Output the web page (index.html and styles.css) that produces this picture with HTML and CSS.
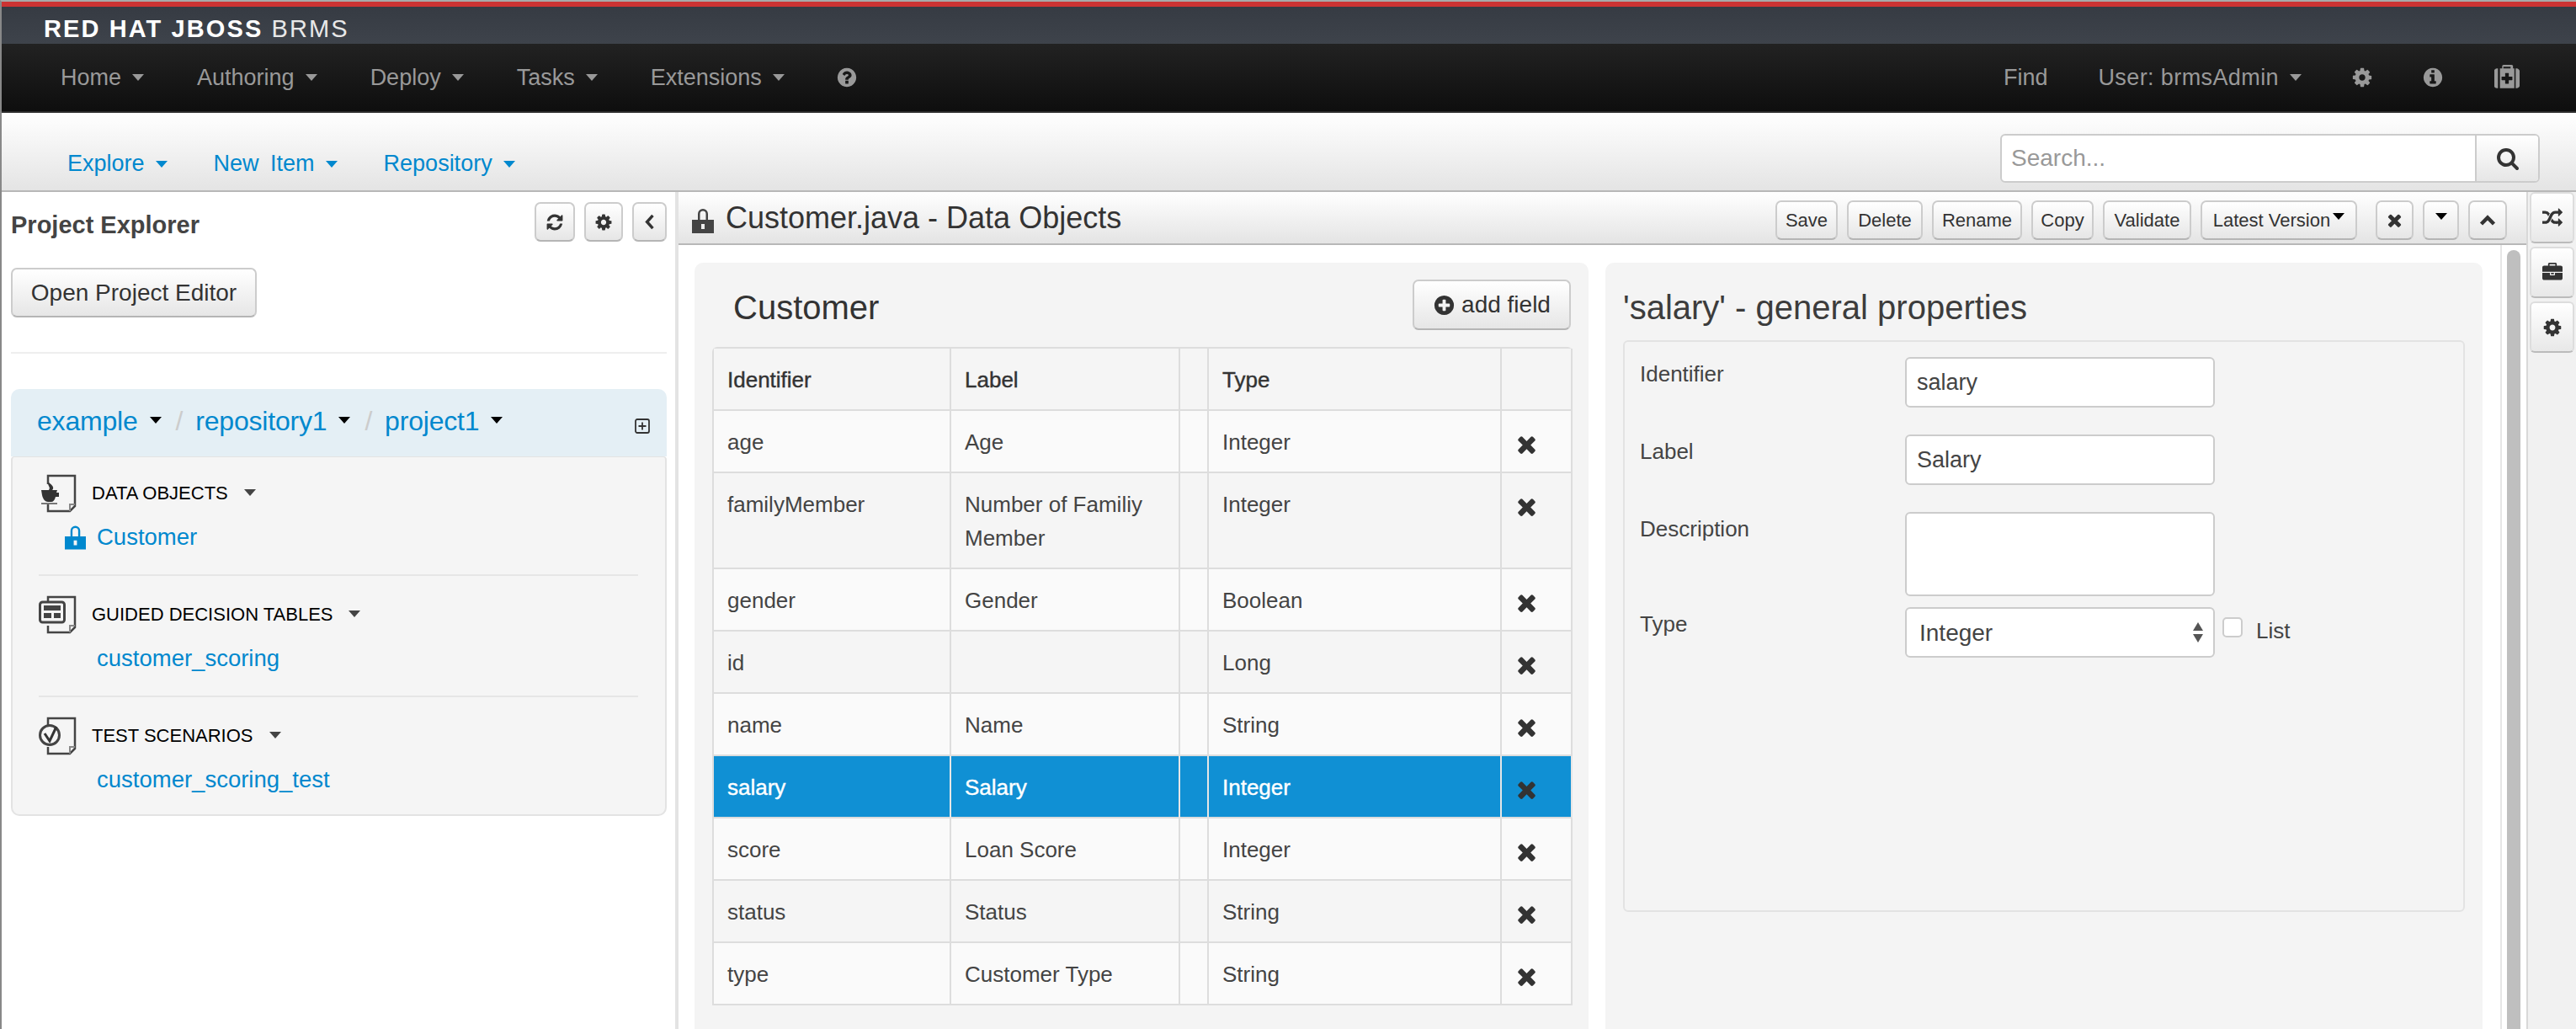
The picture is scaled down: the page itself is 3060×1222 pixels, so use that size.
FILE: index.html
```html
<!DOCTYPE html>
<html lang="en">
<head>
    <meta charset="UTF-8">
    <title>Red Hat JBoss BRMS</title>
    <link rel="stylesheet" href="styles.css">
</head>
<body>
    <svg class="sprite" xmlns="http://www.w3.org/2000/svg">
        <symbol id="i-cog" viewBox="0 0 1792 1792"><path d="M1152 896q0-106-75-181t-181-75-181 75-75 181 75 181 181 75 181-75 75-181zm512-109v222q0 12-8 23t-20 13l-185 28q-19 54-39 91 35 50 107 138 10 12 10 25t-9 23q-27 37-99 108t-94 71q-12 0-26-9l-138-108q-44 23-91 38-16 136-29 186-7 28-36 28h-222q-14 0-24.5-8.5t-11.5-21.5l-28-184q-49-16-90-37l-141 107q-10 9-25 9-14 0-25-11-126-114-165-168-7-10-7-23 0-12 8-23 15-21 51-66.5t54-70.5q-27-50-41-99l-183-27q-13-2-21-12.5t-8-23.5v-222q0-12 8-23t19-13l186-28q14-46 39-92-40-57-107-138-10-12-10-24 0-10 9-23 26-36 98.5-107.5t94.5-71.5q13 0 26 10l138 107q44-23 91-38 16-136 29-186 7-28 36-28h222q14 0 24.5 8.5t11.5 21.5l28 184q49 16 90 37l142-107q9-9 24-9 13 0 25 10 129 119 165 170 7 8 7 22 0 12-8 23-15 21-51 66.5t-54 70.5q26 50 41 98l183 28q13 2 21 12.5t8 23.5z"/></symbol>
        <symbol id="i-times" viewBox="0 0 1792 1792"><path d="M1490 1322q0 40-28 68l-136 136q-28 28-68 28t-68-28l-294-294-294 294q-28 28-68 28t-68-28l-136-136q-28-28-28-68t28-68l294-294-294-294q-28-28-28-68t28-68l136-136q28-28 68-28t68 28l294 294 294-294q28-28 68-28t68 28l136 136q28 28 28 68t-28 68l-294 294 294 294q28 28 28 68z"/></symbol>
        <symbol id="i-search" viewBox="0 0 1792 1792"><path d="M1216 832q0-185-131.5-316.5t-316.5-131.5-316.5 131.5-131.5 316.5 131.5 316.5 316.5 131.5 316.5-131.5 131.5-316.5zm512 832q0 52-38 90t-90 38q-54 0-90-38l-343-342q-179 124-399 124-143 0-273.5-55.5t-225-150-150-225-55.5-273.5 55.5-273.5 150-225 225-150 273.5-55.5 273.5 55.5 225 150 150 225 55.5 273.5q0 220-124 399l343 343q37 37 37 90z"/></symbol>
        <symbol id="i-question" viewBox="0 0 1792 1792"><path d="M1024 1376v-192q0-14-9-23t-23-9h-192q-14 0-23 9t-9 23v192q0 14 9 23t23 9h192q14 0 23-9t9-23zm256-672q0-88-55.5-163t-138.5-116-170-41q-243 0-371 213-15 24 8 42l132 100q7 6 19 6 16 0 25-12 53-68 86-92 34-24 86-24 48 0 85.5 26t37.5 59q0 38-20 61t-68 45q-63 28-115.5 86.5t-52.5 125.5v36q0 14 9 23t23 9h192q14 0 23-9t9-23q0-19 21.5-49.5t54.5-49.5q32-18 49-28.5t46-35 44.5-48 28-60.5 12.5-81zm384 192q0 209-103 385.5t-279.5 279.5-385.5 103-385.5-103-279.5-279.5-103-385.5 103-385.5 279.5-279.5 385.5-103 385.5 103 279.5 279.5 103 385.5z"/></symbol>
        <symbol id="i-info" viewBox="0 0 1792 1792"><path d="M1152 1376v-160q0-14-9-23t-23-9h-96v-512q0-14-9-23t-23-9h-320q-14 0-23 9t-9 23v160q0 14 9 23t23 9h96v320h-96q-14 0-23 9t-9 23v160q0 14 9 23t23 9h448q14 0 23-9t9-23zm-128-896v-160q0-14-9-23t-23-9h-192q-14 0-23 9t-9 23v160q0 14 9 23t23 9h192q14 0 23-9t9-23zm640 416q0 209-103 385.5t-279.5 279.5-385.5 103-385.5-103-279.5-279.5-103-385.5 103-385.5 279.5-279.5 385.5-103 385.5 103 279.5 279.5 103 385.5z"/></symbol>
        <symbol id="i-plus" viewBox="0 0 1792 1792"><path d="M1344 960v-128q0-26-19-45t-45-19h-256v-256q0-26-19-45t-45-19h-128q-26 0-45 19t-19 45v256h-256q-26 0-45 19t-19 45v128q0 26 19 45t45 19h256v256q0 26 19 45t45 19h128q26 0 45-19t19-45v-256h256q26 0 45-19t19-45zm320-64q0 209-103 385.5t-279.5 279.5-385.5 103-385.5-103-279.5-279.5-103-385.5 103-385.5 279.5-279.5 385.5-103 385.5 103 279.5 279.5 103 385.5z"/></symbol>
        <symbol id="i-refresh" viewBox="0 0 1792 1792"><path d="M1639 1056q0 5-1 7-64 268-268 434.5t-478 166.5q-146 0-282.5-55t-243.5-157l-129 129q-19 19-45 19t-45-19-19-45v-448q0-26 19-45t45-19h448q26 0 45 19t19 45-19 45l-137 137q71 66 161 102t187 36q134 0 250-65t186-179q11-17 53-117 8-23 30-23h192q13 0 22.5 9.5t9.5 22.5zm25-800v448q0 26-19 45t-45 19h-448q-26 0-45-19t-19-45 19-45l138-138q-148-137-349-137-134 0-250 65t-186 179q-11 17-53 117-8 23-30 23h-199q-13 0-22.5-9.5t-9.5-22.5v-7q65-268 270-434.5t480-166.5q146 0 284 55.5t245 156.5l130-129q19-19 45-19t45 19 19 45z"/></symbol>
        <symbol id="i-random" viewBox="0 0 1792 1792"><path d="M666 481q-60 92-137 273-22-45-37-72.5t-40.5-63.5-51-56.5-63-35-81.5-14.5h-224q-14 0-23-9t-9-23v-192q0-14 9-23t23-9h224q250 0 410 225zm1126 799q0 14-9 23l-320 320q-9 9-23 9-13 0-22.5-9.5t-9.5-22.5v-192q-32 0-85 .5t-81 1-73-1-71-5-64-10.5-63-18.5-58-28.5-59-40-55-53.5-56-69.5q59-93 136-273 22 45 37 72.5t40.5 63.5 51 56.5 63 35 81.5 14.5h256v-192q0-14 9-23t23-9q12 0 24 10l319 319q9 9 9 23zm0-896q0 14-9 23l-320 320q-9 9-23 9-13 0-22.5-9.5t-9.5-22.5v-192h-256q-48 0-87 15t-69 45-51 61.5-45 77.5q-32 62-78 171-29 66-49.5 111t-54 105-64 100-74 83-90 68.5-106.5 42-128 16.5h-224q-14 0-23-9t-9-23v-192q0-14 9-23t23-9h224q48 0 87-15t69-45 51-61.5 45-77.5q32-62 78-171 29-66 49.5-111t54-105 64-100 74-83 90-68.5 106.5-42 128-16.5h256v-192q0-14 9-23t23-9q12 0 24 10l319 319q9 9 9 23z"/></symbol>
        <symbol id="i-briefcase" viewBox="0 0 1792 1792"><path d="M640 256h512v-128h-512v128zm1152 640v480q0 66-47 113t-113 47h-1472q-66 0-113-47t-47-113v-480h672v160q0 26 19 45t45 19h320q26 0 45-19t19-45v-160h672zm-768 0v128h-256v-128h256zm768-480v384h-1792v-384q0-66 47-113t113-47h352v-160q0-40 28-68t68-28h576q40 0 68 28t28 68v160h352q66 0 113 47t47 113z"/></symbol>
        <symbol id="i-medkit" viewBox="0 0 1792 1792"><path d="M1280 1056v-192q0-14-9-23t-23-9h-224v-224q0-14-9-23t-23-9h-192q-14 0-23 9t-9 23v224h-224q-14 0-23 9t-9 23v192q0 14 9 23t23 9h224v224q0 14 9 23t23 9h192q14 0 23-9t9-23v-224h224q14 0 23-9t9-23zm-640-800h512v-128h-512v128zm-384 0v1408h-64q-92 0-158-66t-66-158v-960q0-92 66-158t158-66h64zm1164 0v1408h-1024v-1408h160v-160q0-40 28-68t68-28h576q40 0 68 28t28 68v160h96zm380 224v960q0 92-66 158t-158 66h-64v-1408h64q92 0 158 66t66 158z"/></symbol>
        <symbol id="i-lock" viewBox="0 0 26 30"><path d="M7 14V7a6 6 0 0 1 12 0v7h-2.500V7a3.500 3.500 0 0 0-7 0v7z"/><path fill-rule="evenodd" d="M0 14h26v16H0zM11 19v6h4v-6z"/></symbol>
        <symbol id="i-doc" viewBox="0 0 46 46"><path d="M11 12V2h32v36l-6 6H11V36" fill="none" stroke="#444" stroke-width="2.500"/><path d="M43 36h-6v8" fill="none" stroke="#888" stroke-width="2"/></symbol>
    </svg>

    <header class="top-bar">
        <div class="brand"><b>RED HAT JBOSS</b> BRMS</div>
        <nav class="main-nav">
            <div class="nav-left">
                <a class="nav-item">Home <i class="caret"></i></a>
                <a class="nav-item">Authoring <i class="caret"></i></a>
                <a class="nav-item">Deploy <i class="caret"></i></a>
                <a class="nav-item">Tasks <i class="caret"></i></a>
                <a class="nav-item">Extensions <i class="caret"></i></a>
                <svg class="icon nav-icon"><use href="#i-question"/></svg>
            </div>
            <div class="nav-right">
                <a class="nav-item">Find</a>
                <a class="nav-item user-item">User: brmsAdmin <i class="caret"></i></a>
                <svg class="icon nav-icon gear-icon"><use href="#i-cog"/></svg>
                <svg class="icon nav-icon info-icon"><use href="#i-info"/></svg>
                <svg class="icon nav-icon med-icon"><use href="#i-medkit"/></svg>
            </div>
        </nav>
    </header>

    <div class="toolbar">
        <div class="tool-links">
            <a class="tool-link">Explore <i class="caret"></i></a>
            <a class="tool-link">New Item <i class="caret"></i></a>
            <a class="tool-link">Repository <i class="caret"></i></a>
        </div>
        <div class="search-box">
            <input class="search-input" type="text" placeholder="Search...">
            <div class="search-btn"><svg class="icon"><use href="#i-search"/></svg></div>
        </div>
    </div>

    <div class="workspace">
        <!-- Project Explorer -->
        <aside class="explorer">
            <div class="explorer-head">
                <h2>Project Explorer</h2>
                <div class="explorer-tools">
                    <button class="btn tool-refresh"><svg class="icon"><use href="#i-refresh"/></svg></button>
                    <button class="btn tool-gear"><svg class="icon"><use href="#i-cog"/></svg></button>
                    <button class="btn tool-back"><svg class="angle" viewBox="0 0 14 22"><path d="M11 2 3 11l8 9"/></svg></button>
                </div>
            </div>
            <button class="btn open-editor">Open Project Editor</button>
            <hr class="rule">
            <div class="crumbs">
                <a>example</a><i class="caret"></i><span class="slash">/</span>
                <a>repository1</a><i class="caret"></i><span class="slash">/</span>
                <a>project1</a><i class="caret"></i>
                <svg class="expand" viewBox="0 0 18 18"><rect x="1" y="1" width="16" height="16" rx="2"/><path d="M9 4.500v9M4.500 9h9"/></svg>
            </div>
            <div class="assets">
                <section class="asset">
                    <div class="asset-head">
                        <svg class="doc-icon" viewBox="0 0 46 46">
                            <use href="#i-doc"/>
                            <path d="M12 10c-3 3 3 5 0 9H3l1 6c1 5 4 8 7 8h4c2 0 4-2 5-6h4v-5h-3l1-3h-6c3-3 0-6-4-9z" fill="#333"/>
                            <path d="M3 35h19" stroke="#777" stroke-width="2"/>
                        </svg>
                        <span>DATA OBJECTS</span><i class="caret"></i>
                    </div>
                    <a class="asset-link"><svg class="lock-blue"><use href="#i-lock"/></svg>Customer</a>
                </section>
                <section class="asset">
                    <div class="asset-head">
                        <svg class="doc-icon" viewBox="0 0 46 46">
                            <use href="#i-doc"/>
                            <rect x="1.500" y="8" width="29" height="24" rx="3" fill="#f5f5f5" stroke="#444" stroke-width="3"/>
                            <path d="M6 12h20v6H6zM6 21h9v6H6zM18 21h8v6h-8z" fill="#444"/>
                        </svg>
                        <span>GUIDED DECISION TABLES</span><i class="caret"></i>
                    </div>
                    <a class="asset-link">customer_scoring</a>
                </section>
                <section class="asset">
                    <div class="asset-head">
                        <svg class="doc-icon" viewBox="0 0 46 46">
                            <use href="#i-doc"/>
                            <circle cx="13" cy="22" r="11.500" fill="#f5f5f5" stroke="#444" stroke-width="3"/>
                            <path d="M7 20l6 9 8-17" fill="none" stroke="#333" stroke-width="3"/>
                        </svg>
                        <span>TEST SCENARIOS</span><i class="caret"></i>
                    </div>
                    <a class="asset-link">customer_scoring_test</a>
                </section>
            </div>
        </aside>

        <!-- Editor -->
        <main class="editor">
            <div class="title-bar">
                <svg class="lock-dark"><use href="#i-lock"/></svg>
                <h1>Customer.java - Data Objects</h1>
                <div class="title-actions">
                    <button class="btn btn-sm act-save">Save</button>
                    <button class="btn btn-sm act-delete">Delete</button>
                    <button class="btn btn-sm act-rename">Rename</button>
                    <button class="btn btn-sm act-copy">Copy</button>
                    <button class="btn btn-sm act-validate">Validate</button>
                    <button class="btn btn-sm act-version">Latest Version<i class="caret"></i></button>
                    <button class="btn btn-sm act-close"><svg class="icon"><use href="#i-times"/></svg></button>
                    <button class="btn btn-sm act-menu"><i class="caret"></i></button>
                    <button class="btn btn-sm act-up"><svg class="angle" viewBox="0 0 20 14"><path d="M2.500 11 10 3.500l7.500 7.500"/></svg></button>
                </div>
            </div>
            <div class="editor-body">
                <div class="panels">
                    <section class="panel object-panel">
                        <div class="object-head">
                            <h3>Customer</h3>
                            <button class="btn add-field"><svg class="icon"><use href="#i-plus"/></svg>add field</button>
                        </div>
                        <table class="fields">
                            <colgroup><col class="c-id"><col class="c-label"><col class="c-gap"><col class="c-type"><col class="c-del"></colgroup>
                            <thead>
                                <tr><th>Identifier</th><th>Label</th><th></th><th>Type</th><th></th></tr>
                            </thead>
                            <tbody>
                                <tr><td>age</td><td>Age</td><td></td><td>Integer</td><td><svg class="icon del"><use href="#i-times"/></svg></td></tr>
                                <tr><td>familyMember</td><td>Number of Familiy Member</td><td></td><td>Integer</td><td><svg class="icon del"><use href="#i-times"/></svg></td></tr>
                                <tr><td>gender</td><td>Gender</td><td></td><td>Boolean</td><td><svg class="icon del"><use href="#i-times"/></svg></td></tr>
                                <tr><td>id</td><td></td><td></td><td>Long</td><td><svg class="icon del"><use href="#i-times"/></svg></td></tr>
                                <tr><td>name</td><td>Name</td><td></td><td>String</td><td><svg class="icon del"><use href="#i-times"/></svg></td></tr>
                                <tr class="selected"><td>salary</td><td>Salary</td><td></td><td>Integer</td><td><svg class="icon del"><use href="#i-times"/></svg></td></tr>
                                <tr><td>score</td><td>Loan Score</td><td></td><td>Integer</td><td><svg class="icon del"><use href="#i-times"/></svg></td></tr>
                                <tr><td>status</td><td>Status</td><td></td><td>String</td><td><svg class="icon del"><use href="#i-times"/></svg></td></tr>
                                <tr><td>type</td><td>Customer Type</td><td></td><td>String</td><td><svg class="icon del"><use href="#i-times"/></svg></td></tr>
                            </tbody>
                        </table>
                    </section>

                    <section class="panel props-panel">
                        <h3>'salary' - general properties</h3>
                        <div class="props-box">
                            <div class="prop-row">
                                <label>Identifier</label>
                                <input class="field" type="text" value="salary">
                            </div>
                            <div class="prop-row">
                                <label>Label</label>
                                <input class="field" type="text" value="Salary">
                            </div>
                            <div class="prop-row desc-row">
                                <label>Description</label>
                                <textarea class="field area"></textarea>
                            </div>
                            <div class="prop-row type-row">
                                <label>Type</label>
                                <div class="select-wrap">
                                    <select class="field select"><option>Integer</option></select>
                                    <i class="spin-up"></i><i class="spin-down"></i>
                                </div>
                                <span class="check"></span><span class="check-label">List</span>
                            </div>
                        </div>
                    </section>
                </div>
                <div class="scroll-track"><div class="scroll-thumb"></div></div>
            </div>
        </main>

        <div class="side-tabs">
            <div class="side-tab"><svg class="icon"><use href="#i-random"/></svg></div>
            <div class="side-tab"><svg class="icon"><use href="#i-briefcase"/></svg></div>
            <div class="side-tab"><svg class="icon"><use href="#i-cog"/></svg></div>
        </div>
    </div>
</body>
</html>
```

FILE: styles.css
```css
* {
    box-sizing: border-box;
}
body {
    margin: 0;
    height: 1222px;
    overflow: hidden;
    display: flex;
    flex-direction: column;
    background-color: #fff;
    border-top: 2px solid #a8a8a8;
    border-left: 2px solid #888;
    font-family: "Liberation Sans", Arial, sans-serif;
    font-size: 26px;
    color: #444;
}
.sprite {
    display: none;
}
.icon {
    fill: currentColor;
    display: block;
}
.caret {
    display: inline-block;
    width: 0;
    height: 0;
    border-left: 7px solid transparent;
    border-right: 7px solid transparent;
    border-top: 8px solid #000;
}

/* Top bar */
.top-bar {
    border-top: 6px solid #cc3333;
    flex: none;
}
.brand {
    height: 44px;
    padding: 13px 0 0 50px;
    background: linear-gradient(#363b43, #3e434b);
    color: #e8e8e8;
    font-size: 29px;
    line-height: 26px;
    letter-spacing: 2.1px;
}
.brand b {
    color: #fff;
}
.main-nav {
    height: 82px;
    padding: 0 70px;
    display: flex;
    justify-content: space-between;
    align-items: center;
    background: linear-gradient(#222, #0e0e0e);
    border-bottom: 2px solid #2c2c2c;
    color: #999;
    font-size: 27px;
}
.nav-left, .nav-right {
    display: flex;
    align-items: center;
}
.nav-item {
    display: flex;
    align-items: center;
    gap: 13px;
    margin-right: 63px;
}
.nav-item .caret {
    border-top-color: #999;
}
.nav-icon {
    width: 26px;
    height: 26px;
    color: #999;
    margin-left: -2px;
}
.nav-right {
    margin-right: -3px;
}
.nav-right .nav-item {
    margin-right: 60px;
}
.user-item {
    margin-right: 59px !important;
    letter-spacing: 0.4px;
}
.info-icon {
    margin-left: 58px;
}
.med-icon {
    margin-left: 60px;
    width: 30px;
    height: 30px;
}
.gear-icon {
    margin-left: 0;
}

/* Second toolbar */
.toolbar {
    height: 94px;
    flex: none;
    padding: 25px 43px 0 78px;
    display: flex;
    justify-content: space-between;
    background: linear-gradient(#fff, #e4e4e4);
    border-bottom: 2px solid #b8b8b8;
}
.tool-links {
    display: flex;
    gap: 55px;
    padding-top: 2px;
    font-size: 27px;
    line-height: 32px;
    word-spacing: 6px;
    color: #0088ce;
}
.tool-link {
    display: flex;
    align-items: center;
    gap: 13px;
}
.tool-link .caret {
    border-top-color: #0088ce;
    margin-top: 2px;
}
.search-box {
    width: 641px;
    height: 58px;
    display: flex;
    border: 2px solid #ccc;
    border-radius: 6px;
    background-color: #fff;
}
.search-input {
    flex: 1;
    min-width: 0;
    border: none;
    border-radius: 6px 0 0 6px;
    padding: 0 11px;
    font: 28px "Liberation Sans", Arial, sans-serif;
    outline: none;
}
.search-input::placeholder {
    color: #999;
}
.search-btn {
    width: 75px;
    display: flex;
    align-items: center;
    justify-content: center;
    border-left: 2px solid #ccc;
    background: linear-gradient(#fff, #e6e6e6);
    border-radius: 0 4px 4px 0;
    color: #333;
}
.search-btn .icon {
    width: 28px;
    height: 28px;
}

/* Shared buttons */
.btn {
    display: flex;
    align-items: center;
    justify-content: center;
    padding: 0;
    background: linear-gradient(#fff, #e6e6e6);
    border: 2px solid #ccc;
    border-bottom-color: #b5b5b5;
    border-radius: 7px;
    font-family: "Liberation Sans", Arial, sans-serif;
    color: #333;
}
.btn .icon {
    width: 22px;
    height: 22px;
}
.angle {
    fill: none;
    stroke: #333;
    stroke-width: 4;
}

/* Project Explorer */
.workspace {
    flex: 1;
    min-height: 0;
    display: flex;
}
.explorer {
    width: 804px;
    flex: none;
    padding: 12px 10px 0 11px;
    border-right: 4px solid #e3e3e3;
}
.explorer-head {
    display: flex;
    justify-content: space-between;
    align-items: center;
    height: 47px;
}
.explorer-head h2 {
    margin: 0;
    padding-top: 8px;
    font-size: 29px;
    color: #444;
}
.explorer-tools {
    display: flex;
    gap: 11px;
}
.explorer-tools .btn {
    height: 47px;
    width: 46px;
}
.tool-refresh {
    width: 48px !important;
}
.tool-back {
    width: 41px !important;
}
.tool-back .angle {
    width: 12px;
    height: 19px;
}
.open-editor {
    width: 292px;
    height: 59px;
    margin-top: 31px;
    font-size: 28px;
}
.rule {
    border: none;
    border-top: 2px solid #eee;
    margin: 41px 0 42px;
}
.crumbs {
    height: 80px;
    padding: 0 20px 4px 31px;
    display: flex;
    align-items: center;
    background-color: #e4eff5;
    border-radius: 10px 10px 0 0;
    font-size: 32px;
    letter-spacing: -0.2px;
    color: #0088ce;
}
.crumbs .caret {
    margin: 0 0 2px 14px;
}
.slash {
    margin: 0 15px 0 17px;
    color: #ccc;
}
.expand {
    width: 18px;
    height: 18px;
    margin: 12px 0 0 auto;
    fill: none;
    stroke: #333;
    stroke-width: 1.800;
}
.assets {
    height: 427px;
    padding: 20px 32px 0 31px;
    background-color: #f5f5f5;
    border: 2px solid #e3e3e3;
    border-top-width: 1px;
    border-radius: 4px 4px 10px 10px;
}
.asset {
    padding-bottom: 24px;
    border-bottom: 2px solid #e6e6e6;
}
.asset + .asset {
    padding-top: 23px;
}
.asset:last-child {
    border-bottom: none;
}
.asset-head {
    height: 46px;
    display: flex;
    align-items: center;
    font-size: 22px;
    color: #000;
}
.doc-icon {
    width: 46px;
    height: 46px;
    margin-right: 17px;
    flex: none;
}
.asset-head .caret {
    margin-left: 19px;
    border-top-color: #444;
    margin-top: -2px;
}
.asset-link {
    display: flex;
    align-items: center;
    margin: 9px 0 0 69px;
    height: 40px;
    font-size: 27.5px;
    color: #0088ce;
}
.lock-blue {
    width: 25px;
    height: 32px;
    margin: 0 13px 0 -38px;
    fill: #0088ce;
}

/* Editor */
.editor {
    flex: 1;
    min-width: 0;
    display: flex;
    flex-direction: column;
}
.title-bar {
    height: 63px;
    flex: none;
    display: flex;
    align-items: center;
    padding: 0 23px 0 16px;
    background: linear-gradient(#fff, #e4e4e4);
    border-bottom: 2px solid #b8b8b8;
}
.lock-dark {
    width: 26px;
    height: 30px;
    margin: 6px 14px 0 0;
    fill: #444;
}
.title-bar h1 {
    margin: 0;
    font-size: 36px;
    font-weight: normal;
    color: #333;
    white-space: nowrap;
}
.title-actions {
    margin: 6px 0 0 auto;
    display: flex;
    gap: 11px;
}
.btn-sm {
    height: 47px;
    font-size: 22px;
}
.act-save { width: 74px; }
.act-delete { width: 90px; }
.act-rename { width: 107px; }
.act-copy { width: 74px; }
.act-validate { width: 105px; }
.act-version {
    width: 186px;
    margin-right: 11px;
    gap: 3px;
}
.act-version .caret, .act-menu .caret {
    margin-bottom: 10px;
}
.act-close { width: 45px; }
.act-close .icon { width: 23px; height: 23px; }
.act-menu { width: 43px; }
.act-up { width: 46px; }
.act-up .angle { width: 20px; height: 14px; stroke-width: 4.500; }

.editor-body {
    flex: 1;
    min-height: 0;
    display: flex;
}
.panels {
    flex: 1;
    display: flex;
    gap: 20px;
    padding: 21px 20px 0 19px;
}
.panel {
    background-color: #f4f4f4;
    border-radius: 10px 10px 0 0;
}
.panel h3 {
    margin: 0;
    font-size: 40px;
    font-weight: normal;
    color: #333;
}
.object-panel {
    width: 1062px;
    padding: 20px 21px 0;
}
.object-head {
    display: flex;
    justify-content: space-between;
    align-items: center;
    height: 60px;
    padding-left: 25px;
    margin-bottom: 20px;
}
.object-head h3 {
    padding-top: 6px;
}
.add-field {
    width: 188px;
    height: 60px;
    gap: 7px;
    font-size: 28px;
}
.add-field .icon {
    width: 27px;
    height: 27px;
}

/* Field table */
.fields {
    width: 1020px;
    table-layout: fixed;
    border-collapse: separate;
    border-spacing: 0;
    border-top: 2px solid #ddd;
    border-left: 2px solid #ddd;
    border-radius: 6px 6px 0 0;
    font-size: 26px;
    line-height: 40px;
    color: #444;
}
.c-id { width: 282px; }
.c-label { width: 272px; }
.c-gap { width: 34px; }
.c-type { width: 348px; }
.c-del { width: 84px; }
.fields th, .fields td {
    padding: 17px 15px 15px 16px;
    vertical-align: top;
    text-align: left;
    border-right: 2px solid #ddd;
    border-bottom: 2px solid #ddd;
}
.fields th {
    height: 74px;
    font-weight: normal;
    color: #333;
    -webkit-text-stroke: 0.4px #333;
    background-color: #f5f5f5;
}
.fields tbody tr:nth-child(odd) td {
    background-color: #fafafa;
}
.fields tbody tr:nth-child(even) td {
    background-color: #f5f5f5;
}
.fields tbody tr.selected td {
    background-color: #1090d4;
    color: #fff;
    -webkit-text-stroke: 0.4px #fff;
    border-right-color: #e6e6e6;
}
.del {
    width: 31px;
    height: 31px;
    margin: 7px 0 0 -2px;
    color: #333;
}

/* Properties */
.props-panel {
    width: 1042px;
    padding: 0 21px;
}
.props-panel h3 {
    padding: 29px 0 0;
    height: 92px;
    line-height: 48px;
    font-size: 40px;
    color: #3c3c3c;
}
.props-box {
    height: 679px;
    padding: 18px 0 0 18px;
    border: 2px solid #e3e3e3;
    border-radius: 6px;
}
.prop-row {
    display: flex;
    align-items: flex-start;
    margin-bottom: 32px;
}
.prop-row label {
    width: 315px;
    padding-top: 5px;
    line-height: 30px;
}
.field {
    width: 368px;
    height: 60px;
    padding: 0 12px;
    background-color: #fff;
    border: 2px solid #ccc;
    border-radius: 6px;
    font: 27px "Liberation Sans", Arial, sans-serif;
    color: #444;
    outline: none;
}
.area {
    height: 100px;
    resize: none;
    display: block;
}
.desc-row {
    margin-bottom: 13px;
}
.select-wrap {
    position: relative;
}
.select {
    appearance: none;
    font-size: 28px;
    padding-left: 15px;
    display: block;
}
.spin-up, .spin-down {
    position: absolute;
    left: 342px;
    width: 0;
    height: 0;
    border-left: 6px solid transparent;
    border-right: 6px solid transparent;
}
.spin-up {
    top: 18px;
    border-bottom: 10px solid #555;
}
.spin-down {
    top: 32px;
    border-top: 10px solid #555;
}
.check {
    width: 24px;
    height: 24px;
    margin: 12px 0 0 9px;
    background-color: #fff;
    border: 2px solid #ccc;
    border-radius: 5px;
}
.check-label {
    margin: 13px 0 0 16px;
    line-height: 30px;
}

/* Scroll bar and side tabs */
.scroll-track {
    width: 31px;
    flex: none;
    padding: 6px 7px 0 6px;
    border-left: 2px solid #e6e6e6;
}
.scroll-thumb {
    height: 100%;
    background-color: #bfbfbf;
    border-radius: 8px 8px 0 0;
}
.side-tabs {
    width: 59px;
    flex: none;
    padding: 0 2px 0 2px;
    display: flex;
    flex-direction: column;
    gap: 4px;
    background-color: #f1f1f1;
    border-left: 2px solid #d8d8d8;
}
.side-tab {
    height: 61px;
    display: flex;
    align-items: center;
    justify-content: center;
    background: linear-gradient(#fff, #e8e8e8);
    border: 2px solid #ddd;
    border-bottom-color: #bbb;
    border-radius: 6px;
    color: #333;
}
.side-tab .icon {
    width: 24px;
    height: 24px;
}
```
